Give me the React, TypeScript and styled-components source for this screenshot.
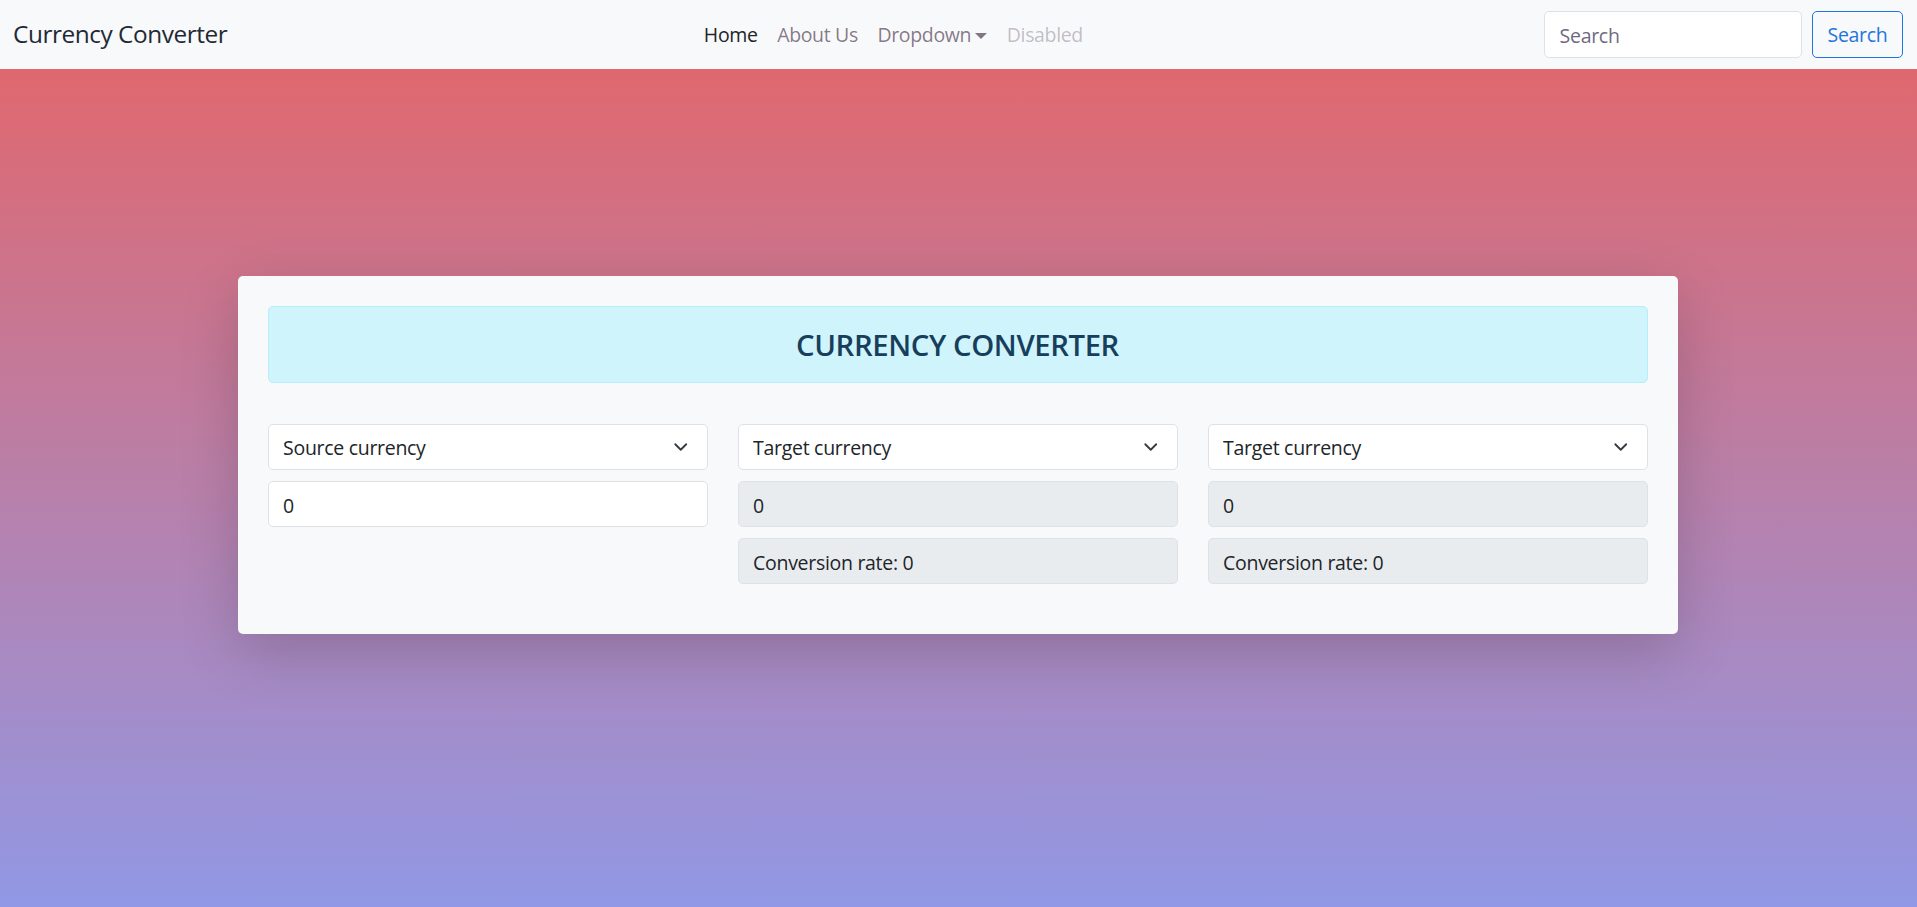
import React from "react";
import styled, { createGlobalStyle } from "styled-components";

const GlobalStyle = createGlobalStyle`
  * { box-sizing: border-box; }
  html, body { margin: 0; padding: 0; }
  body {
    font-family: "Open Sans", "Noto Sans", "Liberation Sans", sans-serif;
    font-size: 19.5px;
    line-height: 1.5;
    color: #212529;
  }
`;

const Page = styled.div`
  min-height: 100vh;
  background: linear-gradient(#e66465, #9198e5);
`;

const Navbar = styled.nav`
  height: 69px;
  background: #f8f9fa;
  display: flex;
  align-items: center;
  padding: 0 14px 0 13px;
`;

const Brand = styled.a`
  font-size: 24.4px;
  letter-spacing: -0.45px;
  color: #1f2a36;
  text-decoration: none;
  margin-right: 19.5px;
  white-space: nowrap;
`;

const NavList = styled.ul`
  list-style: none;
  display: flex;
  margin: 0 auto;
  padding: 0;
  transform: translateX(-2px);
`;

const NavLink = styled.a<{ $active?: boolean; $disabled?: boolean; $caret?: boolean }>`
  display: inline-flex;
  align-items: center;
  padding: 0 9.8px;
  font-size: 19.5px;
  letter-spacing: -0.35px;
  text-decoration: none;
  color: ${(p) =>
    p.$active ? "#212529" : p.$disabled ? "rgba(60,40,70,0.3)" : "rgba(60,37,60,0.62)"};
  &::after {
    content: ${(p) => (p.$caret ? '""' : "none")};
    display: inline-block;
    margin-left: 4px;
    border-top: 6px solid currentColor;
    border-left: 6px solid transparent;
    border-right: 6px solid transparent;
    transform: translateY(1px);
  }
`;

const SearchForm = styled.form`
  display: flex;
  gap: 10px;
`;

const SearchInput = styled.input`
  width: 258px;
  height: 47px;
  padding: 8px 14.6px 6px;
  font: inherit;
  font-size: 19.5px;
  letter-spacing: -0.3px;
  color: #212529;
  background: #fff;
  border: 1px solid #dee2e6;
  border-radius: 5px;
  outline: none;
  &::placeholder { color: #6f6a80; }
`;

const SearchButton = styled.button`
  width: 91px;
  height: 47px;
  padding: 1px 0 0;
  font: inherit;
  font-size: 19.5px;
  letter-spacing: -0.3px;
  color: #1f74e0;
  background: transparent;
  border: 1px solid #1f74e0;
  border-radius: 5px;
`;

const Main = styled.main`
  padding-top: 207px;
  padding-bottom: 40px;
`;

const Card = styled.section`
  width: 1440px;
  margin: 0 auto;
  padding: 30px 30px 50px;
  background: #f8f9fa;
  border-radius: 5px;
  box-shadow: 0 19px 58px rgba(0, 0, 0, 0.175);
  transform: translateX(-1px);
`;

const Alert = styled.div`
  height: 77px;
  display: flex;
  align-items: center;
  justify-content: center;
  padding-top: 2px;
  background: #cff4fc;
  border: 1px solid #b6effb;
  border-radius: 5px;
  color: #173f5c;
`;

const Title = styled.h4`
  margin: 0;
  font-size: 29.3px;
  font-weight: 600;
  letter-spacing: -0.4px;
  line-height: 1.2;
`;

const Grid = styled.div`
  margin-top: 41px;
  display: grid;
  grid-template-columns: repeat(3, 440px);
  column-gap: 30px;
`;

const Column = styled.div`
  display: flex;
  flex-direction: column;
  gap: 11px;
`;

const SelectWrap = styled.div`
  position: relative;
`;

const Select = styled.select`
  width: 100%;
  height: 46px;
  padding: 8px 48px 6px 14.6px;
  font: inherit;
  font-size: 19.5px;
  letter-spacing: -0.3px;
  color: #212529;
  background: #fff;
  border: 1px solid #dee2e6;
  border-radius: 5px;
  appearance: none;
  -webkit-appearance: none;
  outline: none;
`;

const Chevron = styled.svg`
  position: absolute;
  right: 17px;
  top: 50%;
  width: 19.5px;
  height: 14.6px;
  transform: translateY(-50%);
  pointer-events: none;
`;

const Field = styled.input<{ $readonly?: boolean }>`
  width: 100%;
  height: 46px;
  padding: 8px 14.6px 6px;
  font: inherit;
  font-size: 19.5px;
  letter-spacing: -0.3px;
  color: #212529;
  background: ${(p) => (p.$readonly ? "#e9ecef" : "#fff")};
  border: 1px solid #dee2e6;
  border-radius: 5px;
  outline: none;
  &:disabled { color: #212529; -webkit-text-fill-color: #212529; opacity: 1; }
`;

const CurrencySelect: React.FC<{ label: string }> = ({ label }) => (
  <SelectWrap>
    <Select defaultValue="">
      <option value="">{label}</option>
    </Select>
    <Chevron viewBox="0 0 16 16" aria-hidden>
      <path d="m2 5 6 6 6-6" fill="none" stroke="#343a40" strokeWidth="2" strokeLinecap="round" strokeLinejoin="round" />
    </Chevron>
  </SelectWrap>
);

export default function App() {
  return (
    <Page>
      <GlobalStyle />
      <Navbar>
        <Brand href="#">Currency Converter</Brand>
        <NavList>
          <li><NavLink href="#" $active>Home</NavLink></li>
          <li><NavLink href="#">About Us</NavLink></li>
          <li><NavLink href="#" $caret>Dropdown</NavLink></li>
          <li><NavLink $disabled>Disabled</NavLink></li>
        </NavList>
        <SearchForm onSubmit={(e) => e.preventDefault()}>
          <SearchInput type="search" placeholder="Search" />
          <SearchButton type="submit">Search</SearchButton>
        </SearchForm>
      </Navbar>
      <Main>
        <Card>
          <Alert>
            <Title>CURRENCY CONVERTER</Title>
          </Alert>
          <Grid>
            <Column>
              <CurrencySelect label="Source currency" />
              <Field type="number" defaultValue="0" />
            </Column>
            <Column>
              <CurrencySelect label="Target currency" />
              <Field $readonly disabled value="0" readOnly />
              <Field $readonly disabled value="Conversion rate: 0" readOnly />
            </Column>
            <Column>
              <CurrencySelect label="Target currency" />
              <Field $readonly disabled value="0" readOnly />
              <Field $readonly disabled value="Conversion rate: 0" readOnly />
            </Column>
          </Grid>
        </Card>
      </Main>
    </Page>
  );
}
